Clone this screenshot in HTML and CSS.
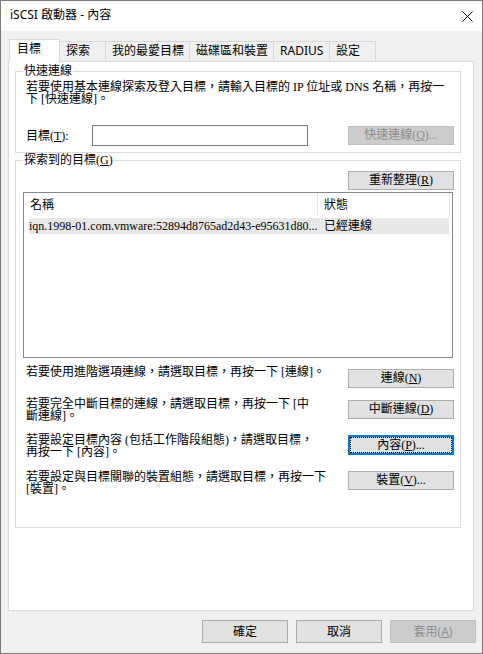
FILE: index.html
```html
<!DOCTYPE html>
<html lang="zh-Hant">
<head>
<meta charset="utf-8">
<title>iSCSI 啟動器 - 內容</title>
<link rel="stylesheet" href="styles.css">
</head>
<body>
<div class="window">
  <div class="titlebar">
    <span class="title">iSCSI 啟動器 - 內容</span>
    <svg class="close" width="11" height="11" viewBox="0 0 11 11"><path d="M0.5 0.5L10.5 10.5M10.5 0.5L0.5 10.5" stroke="#000" stroke-width="1" fill="none"/></svg>
  </div>
  <div class="body">
    <div class="tabs">
      <div class="tab tab-active">目標</div>
      <div class="tab tab-w47">探索</div>
      <div class="tab tab-w85">我的最愛目標</div>
      <div class="tab tab-w85">磁碟區和裝置</div>
      <div class="tab tab-w57">RADIUS</div>
      <div class="tab tab-w47">設定</div>
    </div>
    <div class="panel">
      <div class="group group-quick">
        <div class="group-title">快速連線</div>
        <p class="desc desc-quick">若要使用基本連線探索及登入目標，請輸入目標的 IP 位址或 DNS 名稱，再按一<br>下 [快速連線]。</p>
        <div class="target-row">
          <span class="field-label">目標(<u>T</u>):</span>
          <div class="input"></div>
          <div class="btn btn-disabled">快速連線(<u>Q</u>)...</div>
        </div>
      </div>
      <div class="group group-found">
        <div class="group-title">探索到的目標(<u>G</u>)</div>
        <div class="refresh-row"><div class="btn">重新整理(<u>R</u>)</div></div>
        <div class="listbox">
          <div class="list-head">
            <div class="col-name">名稱</div>
            <div class="col-status">狀態</div>
          </div>
          <div class="list-row">
            <div class="cell-name">iqn.1998-01.com.vmware:52894d8765ad2d43-e95631d80...</div>
            <div class="cell-status">已經連線</div>
          </div>
        </div>
        <div class="action action-1">
          <p class="desc">若要使用進階選項連線，請選取目標，再按一下 [連線]。</p>
          <div class="btn">連線(<u>N</u>)</div>
        </div>
        <div class="action action-2">
          <p class="desc">若要完全中斷目標的連線，請選取目標，再按一下 [中<br>斷連線]。</p>
          <div class="btn">中斷連線(<u>D</u>)</div>
        </div>
        <div class="action action-3">
          <p class="desc">若要設定目標內容 (包括工作階段組態)，請選取目標，<br>再按一下 [內容]。</p>
          <div class="btn btn-default"><span class="focus-ring">內容(<u>P</u>)...</span></div>
        </div>
        <div class="action action-4">
          <p class="desc">若要設定與目標關聯的裝置組態，請選取目標，再按一下<br>[裝置]。</p>
          <div class="btn">裝置(<u>V</u>)...</div>
        </div>
      </div>
    </div>
    <div class="footer">
      <div class="dbtn">確定</div>
      <div class="dbtn">取消</div>
      <div class="dbtn dbtn-disabled">套用(<u>A</u>)</div>
    </div>
  </div>
</div>
</body>
</html>
```
FILE: styles.css
```css
* { box-sizing: border-box; margin: 0; padding: 0; }
html, body { width: 483px; height: 654px; overflow: hidden; }
body {
  font-family: "Noto Sans", "Noto Sans CJK TC", sans-serif;
  font-size: 12px;
  color: #000;
  background: #fff;
}
u { text-decoration: underline; text-underline-offset: 1px; }

.window {
  width: 483px;
  height: 654px;
  border: 1px solid #7a7a7a;
  display: flex;
  flex-direction: column;
  background: #f0f0f0;
}

.titlebar {
  height: 30px;
  flex: 0 0 30px;
  background: #fff;
  display: flex;
  align-items: center;
  padding-left: 9px;
}
.title { line-height: 14px; margin-top: -2px; }
.close { margin-left: auto; margin-right: 9px; display: block; }

.body {
  flex: 1;
  display: flex;
  flex-direction: column;
  padding-top: 8px;
}

.tabs {
  display: flex;
  align-items: flex-end;
  height: 22px;
  flex: 0 0 22px;
  padding-left: 8px;
}
.tab {
  height: 20px;
  border: 1px solid #d9d9d9;
  border-bottom: none;
  margin-left: -1px;
  padding-left: 6px;
  line-height: 18px;
  background: #f0f0f0;
  white-space: nowrap;
}
.tab-active {
  width: 51px;
  height: 23px;
  margin-left: 0;
  margin-bottom: -1px;
  padding-left: 7px;
  background: #fff;
  position: relative;
  z-index: 1;
}
.tab-w47 { width: 47px; }
.tab-w57 { width: 57px; }
.tab-w85 { width: 85px; }

.panel {
  flex: 0 0 550px;
  height: 550px;
  margin: 0 8px 0 7px;
  background: #fff;
  border: 1px solid #d9d9d9;
  font-family: "Liberation Serif", "Noto Sans CJK TC", serif;
}

.group {
  border: 1px solid #dcdcdc;
  margin: 9px 12px 0 6px;
}
.group-found { margin-top: 7px; padding-bottom: 32px; }
.group-quick { padding-bottom: 6px; }
.group-title {
  width: fit-content;
  margin: -7px 0 0 7px;
  padding: 0 1px;
  background: #fff;
  line-height: 13px;
  white-space: nowrap;
}

.desc { line-height: 12px; white-space: nowrap; }
.desc-quick { margin-top: 3px; padding-left: 10px; }

.target-row {
  display: flex;
  align-items: center;
  height: 21px;
  margin-top: 20px;
  padding: 0 6px 0 10px;
}
.field-label { width: 66px; line-height: 14px; }
.input {
  width: 216px;
  height: 21px;
  border: 1px solid #7a7a7a;
  background: #fff;
}

.btn {
  width: 106px;
  height: 19px;
  flex: 0 0 auto;
  border: 1px solid #adadad;
  background: #e1e1e1;
  text-align: center;
  line-height: 17px;
  margin-left: auto;
  white-space: nowrap;
}
.btn-disabled {
  background: #cccccc;
  border-color: #bfbfbf;
  color: #8d8d8d;
}
.btn-default {
  height: 20px;
  border: 2px solid #0078d7;
  line-height: 16px;
  padding: 1px;
}
.focus-ring {
  display: block;
  height: 14px;
  line-height: 14px;
  outline: 1px dotted #000;
}

.refresh-row {
  display: flex;
  justify-content: flex-end;
  margin-top: 4px;
  padding-right: 6px;
}

.listbox {
  height: 166px;
  margin: 2px 7px 0 7px;
  border: 1px solid #828790;
  background: #fff;
}
.list-head {
  display: flex;
  height: 24px;
  line-height: 24px;
}
.col-name {
  width: 294px;
  padding-left: 6px;
  border-right: 1px solid #e5e5e5;
}
.col-status {
  width: 132px;
  padding-left: 6px;
  border-right: 1px solid #e5e5e5;
}
.list-row {
  display: flex;
  width: 420px;
  height: 16px;
  margin-left: 5px;
  margin-top: 1px;
  line-height: 16px;
  background: #e8e8e8;
}
.cell-name {
  width: 289px;
  white-space: nowrap;
  overflow: hidden;
}
.cell-status { padding-left: 6px; white-space: nowrap; }

.action {
  display: flex;
  align-items: flex-start;
  padding: 0 6px 0 10px;
}
.action-1 { margin-top: 8px; }
.action-1 .btn { margin-top: 3px; }
.action-2 { margin-top: 10px; }
.action-2 .btn { margin-top: 2px; }
.action-3 { margin-top: 12px; }
.action-3 .btn { margin-top: 1px; }
.action-4 { margin-top: 13px; }

.footer {
  display: flex;
  justify-content: flex-end;
  gap: 8px;
  margin-top: 9px;
  padding-right: 6px;
}
.dbtn {
  width: 86px;
  height: 23px;
  border: 1px solid #adadad;
  background: #e1e1e1;
  text-align: center;
  line-height: 21px;
}
.dbtn-disabled {
  background: #cccccc;
  border-color: #bfbfbf;
  color: #8d8d8d;
}
```
